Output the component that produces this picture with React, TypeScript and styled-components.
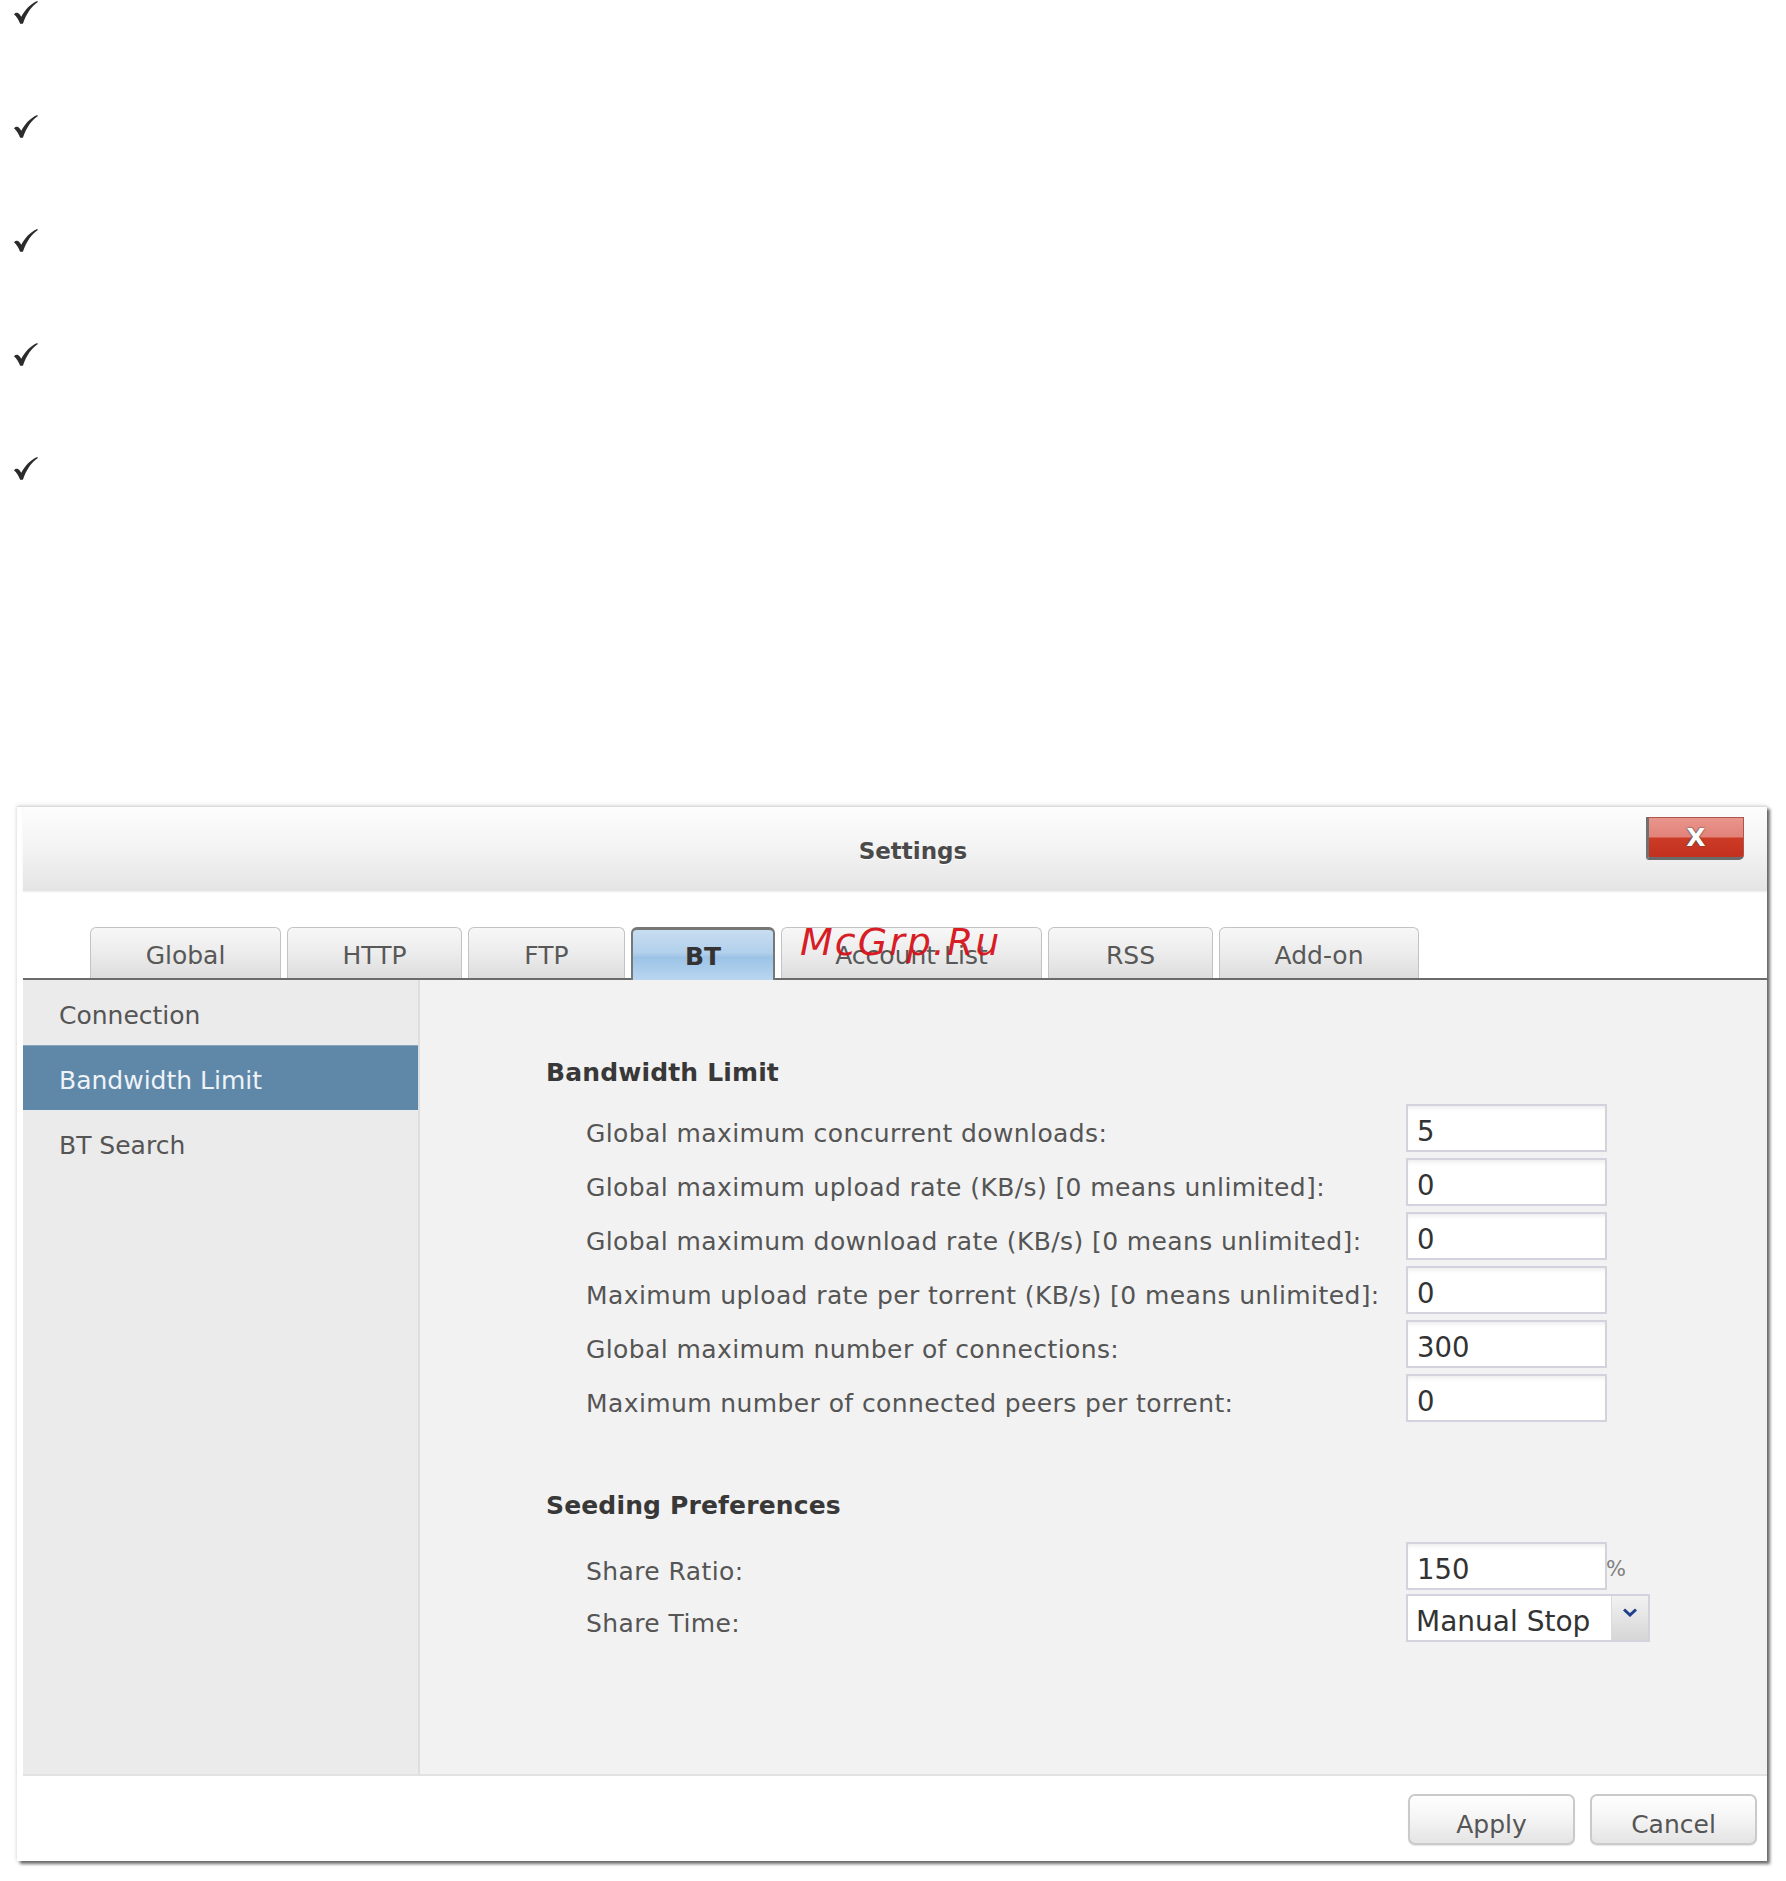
import React from 'react';
import styled, { createGlobalStyle } from 'styled-components';

const GlobalStyle = createGlobalStyle`
  html, body {
    margin: 0;
    padding: 0;
    background: #ffffff;
  }
  body {
    font-family: "DejaVu Sans", Verdana, sans-serif;
  }
`;

const TABS = [
  { label: 'Global', width: 191 },
  { label: 'HTTP', width: 175 },
  { label: 'FTP', width: 157 },
  { label: 'BT', width: 144, active: true },
  { label: 'Account List', width: 261 },
  { label: 'RSS', width: 165 },
  { label: 'Add-on', width: 200 },
];

const SIDE_ITEMS = ['Connection', 'Bandwidth Limit', 'BT Search'];

const BANDWIDTH_FIELDS = [
  { label: 'Global maximum concurrent downloads:', value: '5' },
  { label: 'Global maximum upload rate (KB/s) [0 means unlimited]:', value: '0' },
  { label: 'Global maximum download rate (KB/s) [0 means unlimited]:', value: '0' },
  { label: 'Maximum upload rate per torrent (KB/s) [0 means unlimited]:', value: '0' },
  { label: 'Global maximum number of connections:', value: '300' },
  { label: 'Maximum number of connected peers per torrent:', value: '0' },
];

const Page = styled.div`
  width: 1786px;
  height: 1881px;
  overflow: hidden;
`;

const CheckList = styled.ul`
  list-style: none;
  margin: 0;
  padding: 0 0 0 14px;
`;

const CheckRow = styled.li`
  height: 114px;
  padding-top: 1px;
  box-sizing: border-box;
`;

const CheckIcon = () => (
  <svg width="24" height="23" viewBox="0 0 24 23">
    <path
      d="M0 13.2 C1.8 11.3 4.1 11.4 5.7 13.5 L7.3 15.8 C10.9 8.9 15.8 3.3 23.2 0 L23.9 1.1 C17.5 5.4 12.5 12.4 8.9 22.8 L6.1 22.8 C4.7 19 2.8 15.6 0 13.2 Z"
      fill="#2b2b2b"
    />
  </svg>
);

const Dialog = styled.div`
  position: relative;
  margin: 236px 0 0 17px;
  width: 1750px;
  height: 1055px;
  box-sizing: border-box;
  padding-left: 6px;
  background: #ffffff;
  border-top: 1px solid #dcdcdc;
  box-shadow: 3px 3px 3px rgba(0, 0, 0, 0.55), 0 0 4px rgba(0, 0, 0, 0.2);
  display: flex;
  flex-direction: column;
`;

const Header = styled.div`
  height: 84px;
  padding: 3px 0 0 36px;
  box-sizing: border-box;
  display: flex;
  align-items: center;
  justify-content: center;
  background: linear-gradient(#fdfdfd 0%, #f3f3f3 50%, #e4e4e4 100%);
  box-shadow: 0 1px 2px rgba(0, 0, 0, 0.08);
`;

const Title = styled.h1`
  margin: 0;
  font-size: 23px;
  font-weight: bold;
  color: #4a4a4a;
  text-shadow: 0 1px 0 #ffffff;
`;

const CloseButton = styled.button`
  position: absolute;
  right: 23px;
  top: 10px;
  width: 98px;
  height: 43px;
  padding: 0;
  border: 1px solid #b0554c;
  border-left: 3px solid #707070;
  border-bottom: 3px solid #6a6a6a;
  border-radius: 0 0 5px 3px;
  background: linear-gradient(#e9958c 0%, #e2837a 48%, #cc3b26 52%, #c3311f 100%);
  color: #ffffff;
  font-family: "DejaVu Sans", Verdana, sans-serif;
  font-size: 25px;
  font-weight: bold;
  line-height: 1;
  text-shadow: 0 0 2px #444, 0 0 1px #444;
`;

const Watermark = styled.div`
  position: absolute;
  left: 783px;
  top: 116px;
  font-family: "DejaVu Sans", sans-serif;
  font-style: oblique;
  font-size: 38px;
  line-height: 1;
  letter-spacing: 2px;
  color: rgba(215, 16, 24, 0.95);
  pointer-events: none;
`;

const TabStrip = styled.div`
  height: 87px;
  display: flex;
  align-items: flex-end;
  gap: 6px;
  padding-left: 67px;
  border-bottom: 2px solid #6b6b6b;
`;

const Tab = styled.div<{ $w: number; $active?: boolean }>`
  width: ${(p) => p.$w}px;
  height: ${(p) => (p.$active ? 53 : 51)}px;
  margin-bottom: ${(p) => (p.$active ? -2 : 0)}px;
  box-sizing: border-box;
  display: flex;
  align-items: center;
  justify-content: center;
  padding-top: ${(p) => (p.$active ? 2 : 4)}px;
  border: ${(p) => (p.$active ? '2px solid #777777' : '1px solid #c3c3c3')};
  border-top-width: ${(p) => (p.$active ? 3 : 1)}px;
  border-bottom: none;
  border-radius: 6px 6px 0 0;
  background: ${(p) =>
    p.$active
      ? 'linear-gradient(#c7ddf1 0%, #b2d0ec 45%, #9cc3e6 55%, #b9d6f0 100%)'
      : 'linear-gradient(#f7f7f7 0%, #ececec 50%, #dddddd 100%)'};
  font-size: 25px;
  font-weight: ${(p) => (p.$active ? 'bold' : 'normal')};
  color: ${(p) => (p.$active ? '#333333' : '#585858')};
  position: relative;
  z-index: ${(p) => (p.$active ? 1 : 0)};
`;

const Body = styled.div`
  height: 796px;
  display: flex;
`;

const SideNav = styled.div`
  width: 397px;
  height: 796px;
  box-sizing: border-box;
  background: #ebebeb;
  border-right: 2px solid #dedede;
  border-bottom: 2px solid #e2e2e2;
`;

const SideItem = styled.div<{ $selected?: boolean }>`
  height: 65px;
  box-sizing: border-box;
  display: flex;
  align-items: center;
  padding: 5px 0 0 36px;
  font-size: 25px;
  color: ${(p) => (p.$selected ? '#eef3f8' : '#555555')};
  background: ${(p) => (p.$selected ? '#5f87a8' : 'transparent')};
  box-shadow: ${(p) => (p.$selected ? 'inset 0 1px 0 #86a5bf' : 'none')};
`;

const Content = styled.div`
  flex: 1;
  height: 796px;
  box-sizing: border-box;
  background: #f2f2f2;
  border-bottom: 2px solid #e2e2e2;
  padding: 78px 0 0 126px;
`;

const SectionTitle = styled.h2<{ $gap?: number }>`
  margin: ${(p) => p.$gap ?? 0}px 0 0 0;
  height: 30px;
  line-height: 30px;
  font-size: 25px;
  letter-spacing: 0.15px;
  font-weight: bold;
  color: #383838;
`;

const FieldGrid = styled.div<{ $top: number; $rowGap: number }>`
  margin: ${(p) => p.$top}px 0 0 40px;
  display: grid;
  grid-template-columns: 820px 201px auto;
  grid-auto-rows: 48px;
  row-gap: ${(p) => p.$rowGap}px;
  align-items: center;
`;

const FieldLabel = styled.span`
  font-size: 25px;
  letter-spacing: 0.4px;
  color: #555555;
  padding-top: 11px;
  white-space: nowrap;
`;

const TextBox = styled.div`
  height: 48px;
  box-sizing: border-box;
  border: 2px solid #d3d3de;
  background: #ffffff;
  box-shadow: inset 0 4px 4px -2px rgba(0, 0, 0, 0.08);
  display: flex;
  align-items: center;
  padding: 6px 0 0 9px;
  font-size: 27.5px;
  color: #333333;
`;

const Unit = styled.span`
  font-size: 21px;
  color: #808080;
  align-self: start;
  padding-top: 15px;
  margin-left: -1px;
`;

const Select = styled.div`
  grid-column: 2 / span 2;
  width: 244px;
  height: 48px;
  box-sizing: border-box;
  border: 2px solid #d3d3de;
  background: #ffffff;
  display: flex;
`;

const SelectValue = styled.span`
  flex: 1;
  display: flex;
  align-items: center;
  padding: 6px 0 0 8px;
  font-size: 28px;
  color: #333333;
  white-space: nowrap;
`;

const SelectButton = styled.span`
  width: 37px;
  background: linear-gradient(#f2f2f2, #d6d6d6);
  border-left: 1px solid #dcdcdc;
  display: flex;
  justify-content: center;
  padding-top: 12px;
  box-sizing: border-box;
`;

const Chevron = () => (
  <svg width="14" height="9" viewBox="0 0 14 9">
    <path d="M1 1.5 L7 7 L13 1.5" fill="none" stroke="#1f3f8a" strokeWidth="3" />
  </svg>
);

const Footer = styled.div`
  flex: 1;
  display: flex;
  justify-content: flex-end;
  align-items: flex-start;
  gap: 15px;
  padding: 18px 10px 0 0;
`;

const FooterButton = styled.button`
  width: 167px;
  height: 51px;
  border: 2px solid #cacaca;
  border-radius: 7px;
  background: linear-gradient(#ffffff 0%, #f4f4f4 50%, #e4e4e4 100%);
  box-shadow: 0 1px 1px rgba(0, 0, 0, 0.1);
  font-family: "DejaVu Sans", Verdana, sans-serif;
  font-size: 25px;
  color: #555555;
  padding: 9px 0 0 0;
`;

export default function App() {
  return (
    <Page>
      <GlobalStyle />
      <CheckList>
        {[0, 1, 2, 3, 4].map((i) => (
          <CheckRow key={i}>
            <CheckIcon />
          </CheckRow>
        ))}
      </CheckList>

      <Dialog>
        <Header>
          <Title>Settings</Title>
        </Header>
        <CloseButton>X</CloseButton>

        <TabStrip>
          {TABS.map((t) => (
            <Tab key={t.label} $w={t.width} $active={t.active}>
              {t.label}
            </Tab>
          ))}
        </TabStrip>
        <Watermark>McGrp.Ru</Watermark>

        <Body>
          <SideNav>
            {SIDE_ITEMS.map((item) => (
              <SideItem key={item} $selected={item === 'Bandwidth Limit'}>
                {item}
              </SideItem>
            ))}
          </SideNav>

          <Content>
            <SectionTitle>Bandwidth Limit</SectionTitle>
            <FieldGrid $top={16} $rowGap={6}>
              {BANDWIDTH_FIELDS.map((f) => (
                <React.Fragment key={f.label}>
                  <FieldLabel>{f.label}</FieldLabel>
                  <TextBox>{f.value}</TextBox>
                  <span />
                </React.Fragment>
              ))}
            </FieldGrid>

            <SectionTitle $gap={69}>Seeding Preferences</SectionTitle>
            <FieldGrid $top={21} $rowGap={4}>
              <FieldLabel>Share Ratio:</FieldLabel>
              <TextBox>150</TextBox>
              <Unit>%</Unit>
              <FieldLabel>Share Time:</FieldLabel>
              <Select>
                <SelectValue>Manual Stop</SelectValue>
                <SelectButton>
                  <Chevron />
                </SelectButton>
              </Select>
            </FieldGrid>
          </Content>
        </Body>

        <Footer>
          <FooterButton>Apply</FooterButton>
          <FooterButton>Cancel</FooterButton>
        </Footer>
      </Dialog>
    </Page>
  );
}
